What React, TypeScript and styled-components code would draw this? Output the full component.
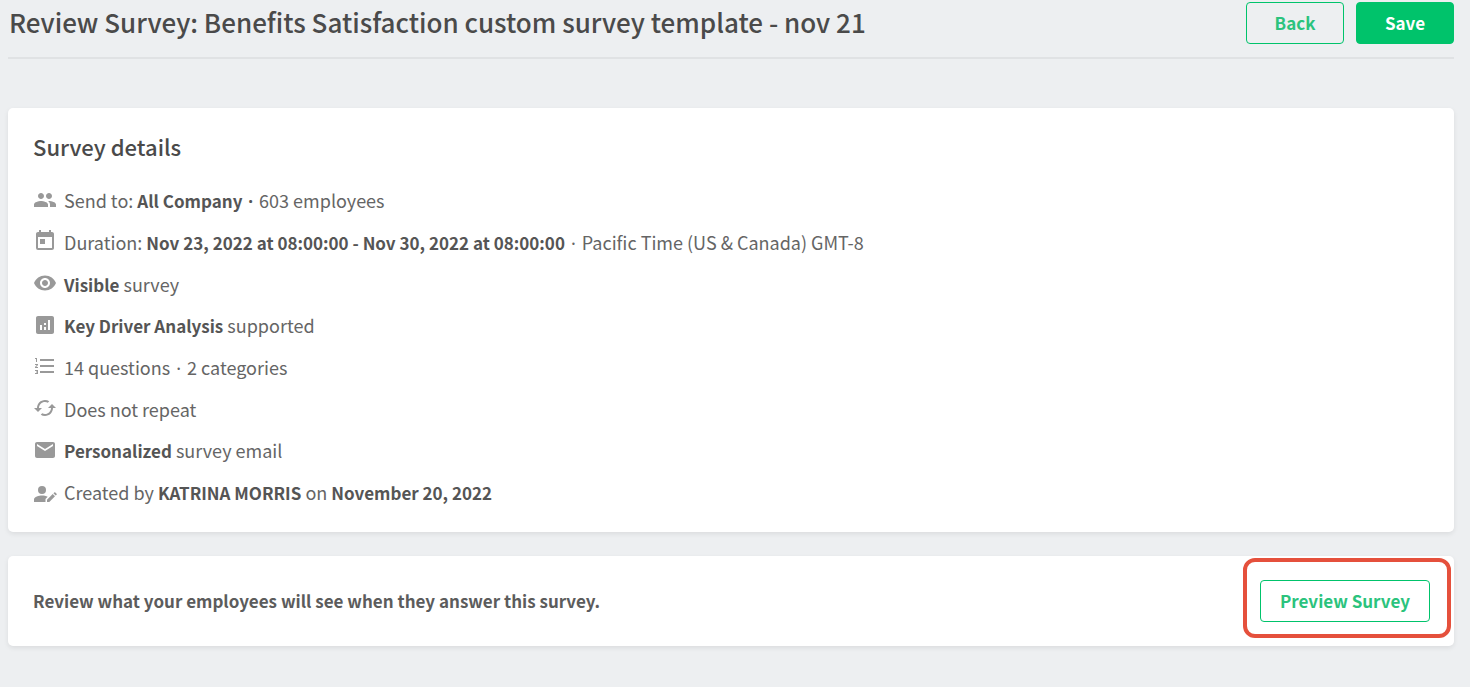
import React from "react";
import styled, { createGlobalStyle } from "styled-components";
import {
  MdPeople,
  MdToday,
  MdVisibility,
  MdAnalytics,
  MdFormatListNumbered,
  MdCached,
  MdEmail,
} from "react-icons/md";

const GlobalStyle = createGlobalStyle`
  *, *::before, *::after { box-sizing: border-box; }
  body {
    margin: 0;
    background: #edeff1;
    color: #656565;
    font-family: "Noto Sans CJK SC", "Noto Sans", sans-serif;
    font-size: 18px;
    line-height: 24px;
  }
`;

const Page = styled.main`
  padding: 2px 16px 40px 8px;
`;

const Header = styled.header`
  display: flex;
  align-items: flex-start;
  justify-content: space-between;
  gap: 24px;
  padding-bottom: 13px;
  border-bottom: 2px solid #e0e2e4;
`;

const Title = styled.h1`
  margin: 0;
  padding-left: 1px;
  font-size: 26px;
  line-height: 40px;
  font-weight: 500;
  color: #4a4a4a;
`;

const Actions = styled.div`
  display: flex;
  gap: 12px;
`;

const Button = styled.button<{ $primary?: boolean; $wide?: boolean }>`
  width: ${({ $wide }) => ($wide ? "170px" : "98px")};
  height: 42px;
  flex: none;
  padding: 0;
  border: 1px solid #00c36b;
  border-radius: 4px;
  background: ${({ $primary }) => ($primary ? "#00c36b" : "transparent")};
  color: ${({ $primary }) => ($primary ? "#fff" : "#2bc37d")};
  font: inherit;
  font-size: 17px;
  font-weight: 700;
  white-space: nowrap;
  cursor: pointer;
`;

const Card = styled.section`
  margin-top: 24px;
  padding: 24px 24px 24px 25px;
  border-radius: 5px;
  background: #fff;
  box-shadow: 0 2px 5px rgba(0, 0, 0, 0.08);
`;

const DetailsCard = styled(Card)`
  margin-top: 49px;
  padding-top: 22px;
  padding-bottom: 19px;
`;

const CardTitle = styled.h2`
  margin: 0 0 18px;
  font-size: 22px;
  line-height: 32px;
  font-weight: 500;
  color: #4a4a4a;
`;

const Details = styled.ul`
  display: grid;
  grid-auto-rows: 1fr;
  min-height: 333px;
  margin: 0;
  padding: 0;
  list-style: none;
`;

const Detail = styled.li`
  display: flex;
  align-items: center;
  gap: 7px;

  svg {
    flex: none;
    width: 24px;
    height: 24px;
    margin-bottom: 2px;
    color: #999;
  }

  strong {
    font-size: 17px;
    font-weight: 700;
    color: #555;
  }
`;

const Dot = styled.span`
  margin: 0 2px;
  font-family: "Noto Sans", sans-serif;
`;

const PreviewCard = styled(Card)`
  display: flex;
  align-items: center;
  justify-content: space-between;
  gap: 24px;
`;

const Message = styled.p`
  margin: 0;
  font-size: 17px;
  font-weight: 700;
  color: #5c5c5c;
`;

const Highlight = styled.div`
  position: relative;

  &::after {
    content: "";
    position: absolute;
    inset: -22px -21px -16px -17px;
    border: 4px solid #e5503c;
    border-radius: 12px;
    pointer-events: none;
  }
`;

const PersonEditIcon = () => (
  <svg viewBox="0 -3 24 24" fill="currentColor" aria-hidden="true">
    <circle cx="9" cy="8" r="4" />
    <path d="M1 20v-2.400c0-3 5-4.100 8-4.100 1.800 0 4 .4 5.700 1.200L12.500 17v3z" />
    <path d="M14 20v-2.300l5.700-5.700 2.300 2.300-5.700 5.700zM20.400 11.300l.9-.9c.3-.3.7-.3 1 0l1.300 1.300c.3.3.3.7 0 1l-.9.9z" />
  </svg>
);

const details: { icon: React.ReactNode; text: React.ReactNode }[] = [
  {
    icon: <MdPeople />,
    text: <>Send to: <strong>All Company <Dot>·</Dot></strong> 603 employees</>,
  },
  {
    icon: <MdToday />,
    text: (
      <>
        Duration: <strong>Nov 23, 2022 at 08:00:00 - Nov 30, 2022 at 08:00:00</strong> <Dot>·</Dot> Pacific Time (US &amp; Canada) GMT-8
      </>
    ),
  },
  { icon: <MdVisibility />, text: <><strong>Visible</strong> survey</> },
  { icon: <MdAnalytics />, text: <><strong>Key Driver Analysis</strong> supported</> },
  { icon: <MdFormatListNumbered />, text: <>14 questions <Dot>·</Dot> 2 categories</> },
  { icon: <MdCached />, text: <>Does not repeat</> },
  { icon: <MdEmail />, text: <><strong>Personalized</strong> survey email</> },
  {
    icon: <PersonEditIcon />,
    text: <>Created by <strong>KATRINA MORRIS</strong> on <strong>November 20, 2022</strong></>,
  },
];

export default function App() {
  return (
    <>
      <GlobalStyle />
      <Page>
        <Header>
          <Title>Review Survey: Benefits Satisfaction custom survey template - nov 21</Title>
          <Actions>
            <Button type="button">Back</Button>
            <Button type="button" $primary>Save</Button>
          </Actions>
        </Header>
        <DetailsCard>
          <CardTitle>Survey details</CardTitle>
          <Details>
            {details.map(({ icon, text }, index) => (
              <Detail key={index}>
                {icon}
                <span>{text}</span>
              </Detail>
            ))}
          </Details>
        </DetailsCard>
        <PreviewCard>
          <Message>Review what your employees will see when they answer this survey.</Message>
          <Highlight>
            <Button type="button" $wide>Preview Survey</Button>
          </Highlight>
        </PreviewCard>
      </Page>
    </>
  );
}
